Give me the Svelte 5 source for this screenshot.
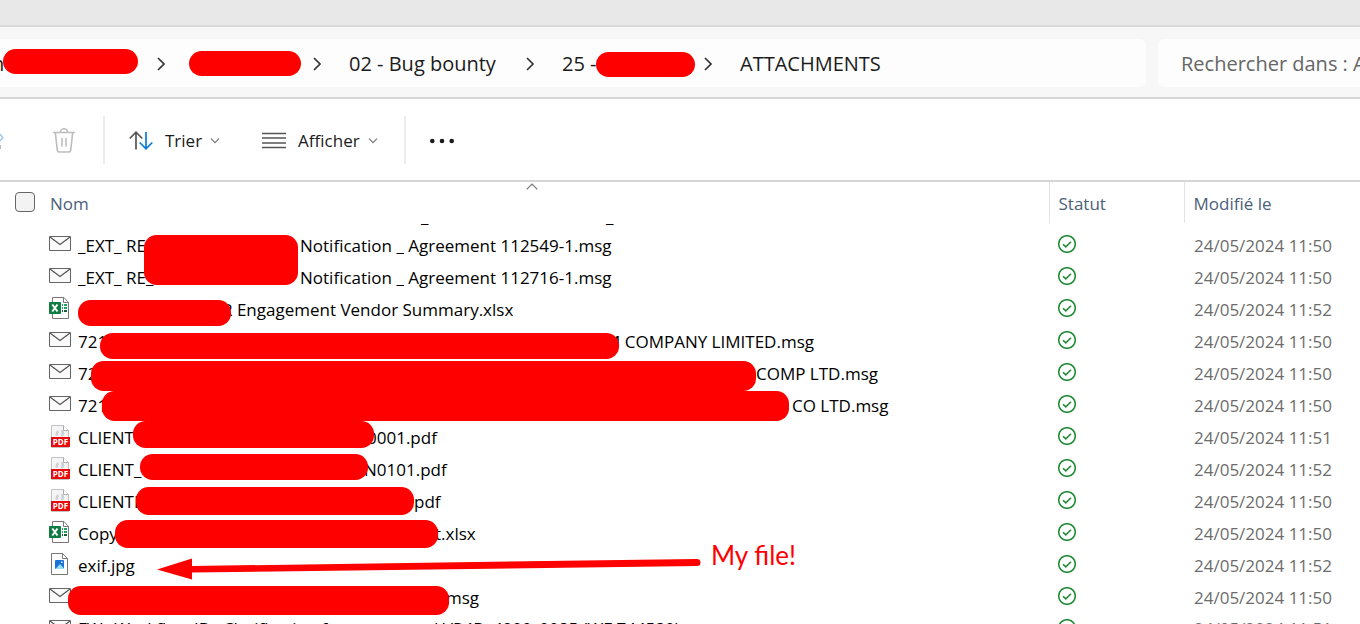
<script>
  const crumbs = [
    { label: 'n', width: 129 },
    { label: '', width: 92 },
    { label: '02 - Bug bounty', width: 149 },
    { label: '25 -', width: 114 },
    { label: 'ATTACHMENTS', width: 0 },
  ];

  // Each file name is a list of text parts; `span` is the room a part takes before the next one.
  const files = [
    { type: 'msg', parts: [{ text: '_EXT_ RE_', span: 222 }, { text: 'Notification _ Agreement 112549-1.msg' }], date: '24/05/2024 11:50' },
    { type: 'msg', parts: [{ text: '_EXT_ RE_', span: 222 }, { text: 'Notification _ Agreement 112716-1.msg' }], date: '24/05/2024 11:50' },
    { type: 'xlsx', parts: [{ text: '', span: 144 }, { text: 'R Engagement Vendor Summary.xlsx' }], date: '24/05/2024 11:52' },
    { type: 'msg', parts: [{ text: '721', span: 527 }, { text: 'M COMPANY LIMITED.msg' }], date: '24/05/2024 11:50' },
    { type: 'msg', parts: [{ text: '72', span: 678 }, { text: 'COMP LTD.msg' }], date: '24/05/2024 11:50' },
    { type: 'msg', parts: [{ text: '721', span: 714 }, { text: 'CO LTD.msg' }], date: '24/05/2024 11:50' },
    { type: 'pdf', parts: [{ text: 'CLIENT', span: 289 }, { text: '0001.pdf' }], date: '24/05/2024 11:51' },
    { type: 'pdf', parts: [{ text: 'CLIENT_', span: 286 }, { text: 'N0101.pdf' }], date: '24/05/2024 11:52' },
    { type: 'pdf', parts: [{ text: 'CLIENTE', span: 336 }, { text: 'pdf' }], date: '24/05/2024 11:50' },
    { type: 'xlsx', parts: [{ text: 'Copy', span: 357 }, { text: 't.xlsx' }], date: '24/05/2024 11:50' },
    { type: 'jpg', parts: [{ text: 'exif.jpg' }], date: '24/05/2024 11:52' },
    { type: 'msg', parts: [{ text: '', span: 368 }, { text: 'msg' }], date: '24/05/2024 11:50' },
    { type: 'msg', parts: [{ text: 'FW_ Workflow ID_ Clarification for announced VR4D_4200_0085 (WF 744580)' }], date: '24/05/2024 11:51' },
  ];

  // Redaction marks: x, y, width, height
  const marks = [
    [3, 49, 135, 25], [189, 51, 112, 25], [596, 52, 99, 25],
    [144, 235, 154, 50], [78, 300, 153, 26], [100, 333, 519, 26],
    [91, 361, 665, 30], [102, 391, 687, 30], [133, 421, 241, 27],
    [140, 454, 228, 26], [136, 487, 278, 28], [115, 520, 323, 28],
    [68, 586, 381, 29],
  ];
</script>

<main class="window">
  <div class="tabs"></div>

  <header class="address">
    <nav class="crumbs" aria-label="Chemin">
      {#each crumbs as crumb, i}
        {#if i > 0}
          <svg class="sep" viewBox="0 0 64 14" aria-hidden="true"><path d="M29 1 35 7 29 13" /></svg>
        {/if}
        <a href="#dossier" style={crumb.width ? `width:${crumb.width}px` : ''}>{crumb.label}</a>
      {/each}
    </nav>
    <input class="search" type="text" aria-label="Rechercher" placeholder="Rechercher dans : ATTACHMENTS" />
  </header>

  <div class="toolbar">
    <button class="share" aria-label="Partager">
      <svg width="4" height="24" viewBox="0 0 4 24"><path d="M0 5 2.800 8.500 0 12" fill="none" stroke="#9ccbf0" stroke-width="1.500" /><path d="M0 16v4" stroke="#bbb" stroke-width="2" /></svg>
    </button>
    <button class="trash" aria-label="Supprimer">
      <svg width="22" height="26" viewBox="0 0 22 26" fill="none" stroke="#bdbdbd" stroke-width="1.600">
        <path d="M0 4.500h22M7.500 4a3.500 3.200 0 0 1 7 0M2.300 4.500l2 17.700a2 2 0 0 0 2 1.800h9.400a2 2 0 0 0 2-1.800L19.700 4.500M9 10v8.500M13 10v8.500" />
      </svg>
    </button>
    <span class="rule"></span>
    <button class="sort">
      <svg width="24" height="20" viewBox="0 0 24 20" fill="none" stroke-width="1.700">
        <path d="M7 18.500V2M.7 7.500 7 1.200 13.300 7.500" stroke="#555" />
        <path d="M17 1v17M10.700 11.500 17 17.800 23.300 11.500" stroke="#0a7cd8" />
      </svg>
      Trier
      <svg class="down" width="10" height="6" viewBox="0 0 10 6"><path d="M1 .7 5 4.700 9 .7" /></svg>
    </button>
    <button class="view">
      <svg width="24" height="18" viewBox="0 0 24 18" stroke="#555" stroke-width="1.500"><path d="M0 1.500h24M0 6h24M0 11h24M0 15.500h24" /></svg>
      Afficher
      <svg class="down" width="10" height="6" viewBox="0 0 10 6"><path d="M1 .7 5 4.700 9 .7" /></svg>
    </button>
    <span class="rule"></span>
    <button class="more" aria-label="Plus">
      <svg width="24" height="6" viewBox="0 0 24 6" fill="#1b1b1b"><circle cx="2.300" cy="3" r="2.300" /><circle cx="12" cy="3" r="2.300" /><circle cx="21.700" cy="3" r="2.300" /></svg>
    </button>
  </div>

  <table>
    <colgroup><col /><col class="c-status" /><col class="c-date" /></colgroup>
    <thead>
      <tr>
        <th>
          <div class="head">
            <input id="all" type="checkbox" aria-label="Tout sélectionner" /><label for="all">Nom</label>
            <svg class="up" width="12" height="7" viewBox="0 0 12 7"><path d="M.7 6.300 6 1 11.300 6.300" /></svg>
          </div>
        </th>
        <th class="line">Statut</th>
        <th class="line">Modifié le</th>
      </tr>
    </thead>
    <tbody>
      <tr class="scrolled">
        <td><div><span style="width:185px">_</span><span>_</span></div></td>
        <td></td>
        <td></td>
      </tr>
      {#each files as file}
        <tr>
          <td>
            <div class="file">
              {#if file.type === 'msg'}
                <svg class="icon" width="22" height="24" viewBox="0 0 22 24"><path d="M.5 3.500h21v14H.5z" fill="#fafafa" stroke="#666" /><path d="m1 4 10 7.500L21 4" fill="none" stroke="#555" stroke-width="1.200" /></svg>
              {:else if file.type === 'xlsx'}
                <svg class="icon" width="22" height="24" viewBox="0 0 22 24">
                  <path d="M3.500.5H15l4.500 5v16h-16z" fill="#fff" stroke="#777" /><path d="M14.500.5v5h5" fill="none" stroke="#777" />
                  <path d="M13 8h5M13 11h5" stroke="#21a366" stroke-width="2" stroke-dasharray="1 1 4" /><path d="M13 14h5" stroke="#185c37" stroke-width="2" stroke-dasharray="1 1 4" />
                  <rect y="5" width="12" height="12" rx="1" fill="#107c41" /><path d="m3.300 7.500 5.200 7M8.500 7.500l-5.200 7" stroke="#fff" stroke-width="1.900" />
                </svg>
              {:else if file.type === 'pdf'}
                <svg class="icon" width="22" height="24" viewBox="0 0 22 24">
                  <path d="M2.500.5h12l5 5v17h-17z" fill="#f4f4f5" stroke="#c3c3c8" /><path d="M14.500.5v5h5" fill="#fff" stroke="#aaaab0" />
                  <path d="M9.500 6.500a3 3 0 0 0-1.500 4M12.500 5.500a3.500 3.500 0 0 1 0 5.500" fill="none" stroke="#cdced6" stroke-width="2.500" />
                  <path d="M2 12h19v10H2z" fill="#e90b0b" />
                  <text x="11.500" y="20" text-anchor="middle">PDF</text>
                </svg>
              {:else}
                <svg class="icon" width="22" height="24" viewBox="0 0 22 24">
                  <path d="M2.500.5h11l5 5v16h-16z" fill="#fff" stroke="#777" /><path d="M13.500.5v5h5" fill="none" stroke="#777" />
                  <rect x="6" y="7" width="9" height="9" rx="1" fill="#1a73d9" /><path d="m6.500 16 4.500-5 4 4.500-.5.500z" fill="#9be0fa" /><path d="M12 8.500h1.500V10H12z" fill="#fff" />
                </svg>
              {/if}
              {#each file.parts as part}<span style={part.span ? `width:${part.span}px` : ''}>{part.text}</span>{/each}
            </div>
          </td>
          <td class="status">
            <svg width="18" height="18" viewBox="0 0 18 18" role="img" aria-label="Disponible"><circle cx="9" cy="9" r="8.300" /><path d="m5 9.300 2.800 2.600L13 6.800" /></svg>
          </td>
          <td class="date">{file.date}</td>
        </tr>
      {/each}
    </tbody>
  </table>

  <svg class="marks" aria-hidden="true">
    {#each marks as [x, y, w, h]}<rect {x} {y} width={w} height={h} rx="12.500" />{/each}
    <path d="M157 569.500 192 558.500V566L697 559a3.500 3.500 0 0 1 0 7L192 572.500V579.500z" />
  </svg>
  <p class="note">My file!</p>
</main>

<style>
  :global(body) { margin: 0; background: #fff; }
  .window {
    position: relative;
    height: 100vh;
    overflow: hidden;
    font: 17px/24px "Open Sans", "Noto Sans", sans-serif;
    color: #000;
  }
  button, input { font: inherit; color: inherit; }
  button { border: 0; padding: 2px 0 0; background: none; display: flex; align-items: center; gap: 12px; }
  svg { display: block; flex: none; }

  .tabs { height: 25px; background: #e8e8e8; border-bottom: 2px solid #d9d9d9; }
  .address {
    display: flex;
    gap: 12px;
    padding: 12px 0 10px;
    background: #f7f7f7;
    border-bottom: 2px solid #d5d5d5;
    font-size: 20px;
    color: #1b1b1b;
  }
  .crumbs {
    flex: 1;
    display: flex;
    align-items: center;
    box-sizing: border-box;
    height: 48px;
    padding-top: 2px;
    overflow: hidden;
    background: #fdfdfd;
    border-radius: 0 6px 6px 0;
  }
  .crumbs a { flex: none; color: inherit; text-decoration: none; white-space: nowrap; }
  .crumbs a:first-child { text-indent: -8px; }
  .sep { width: 64px; height: 14px; fill: none; stroke: #333; stroke-width: 1.7; }
  .search {
    width: 202px;
    box-sizing: border-box;
    padding: 2px 0 0 23px;
    border: 0;
    border-radius: 6px 0 0 6px;
    background: #fdfdfd;
  }
  .search::placeholder { color: #666; opacity: 1; }

  .toolbar {
    display: flex;
    align-items: center;
    height: 81px;
    border-bottom: 2px solid #d5d5d5;
    color: #1b1b1b;
  }
  .trash { margin: 0 28px 0 49px; }
  .rule { width: 2px; height: 48px; background: #ececec; }
  .sort { margin: 0 42px 0 24px; }
  .view { margin-right: 26px; }
  .more { margin-left: 24px; }
  .down, .up { fill: none; stroke: #777; stroke-width: 1.2; }
  .down { margin-left: -4px; }

  table { width: 100%; border-collapse: collapse; table-layout: fixed; }
  .c-status { width: 135px; }
  .c-date { width: 176px; }
  th, td { box-sizing: border-box; padding: 0; text-align: left; font-weight: 400; }
  th { height: 41px; color: #4c607a; }
  .line { border-left: 1px solid #e2e2e2; padding: 2px 0 0 9px; }
  .head { position: relative; display: flex; align-items: center; gap: 15px; padding-left: 15px; height: 41px; }
  .head label { padding-top: 2px; }
  .head input {
    appearance: none;
    box-sizing: border-box;
    width: 20px;
    height: 20px;
    margin: 0 0 1px;
    border: 1px solid #666;
    border-radius: 4px;
    background: #f3f3f3;
  }
  .up { position: absolute; top: 1px; left: calc(50% + 2px); }
  td { height: 32px; }
  .scrolled td { height: 6px; }
  .scrolled div { display: flex; align-items: flex-end; height: 6px; overflow: hidden; padding-left: 421px; }
  .scrolled span, .file span { flex: none; white-space: pre; }
  .file { display: flex; align-items: center; height: 32px; padding-left: 49px; }
  .file span { padding-top: 2px; }
  .icon { margin-right: 7px; }
  .icon text { font: 700 8px "Open Sans", sans-serif; fill: #fff; }
  .status { padding: 0 0 2px 9px; }
  .status svg { fill: none; stroke: #1d8a35; stroke-width: 1.5; }
  .date { padding: 2px 0 0 10px; color: #6d6d6d; white-space: nowrap; }
  tr:last-child .file span, tr:last-child .date { padding-top: 0; }

  .marks { position: absolute; inset: 0; width: 100%; height: 100%; fill: #f00; pointer-events: none; }
  .note { position: absolute; left: 711px; top: 539px; margin: 0; font: 26px/32px Lato, sans-serif; color: #f00; }
</style>
